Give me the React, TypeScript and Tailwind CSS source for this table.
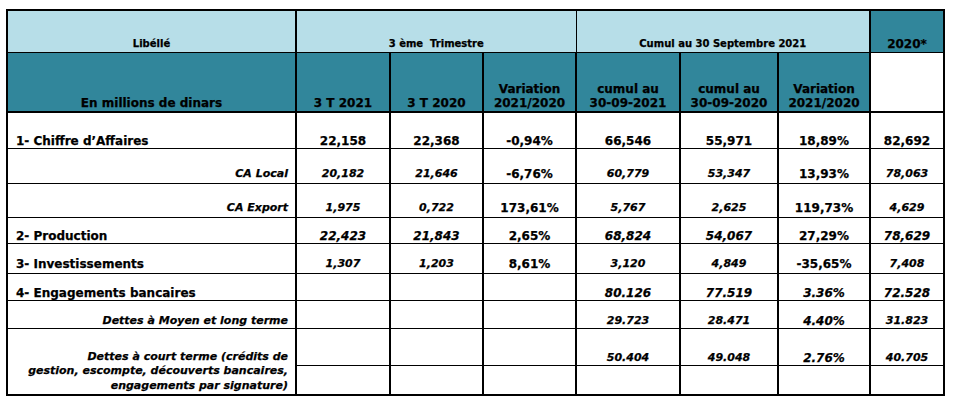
import React from 'react';

type Cell = { v: string; i?: boolean; s?: boolean };

type Row = {
  label: string;
  sub?: boolean;
  h: string;
  pb: string;
  cells: Cell[];
};

const rows: Row[] = [
  {
    label: '1- Chiffre d\u2019Affaires',
    h: 'h-[36px]',
    pb: 'pb-0',
    cells: [
      { v: '22,158' }, { v: '22,368' }, { v: '-0,94%' },
      { v: '66,546' }, { v: '55,971' }, { v: '18,89%' }, { v: '82,692' },
    ],
  },
  {
    label: 'CA Local',
    sub: true,
    h: 'h-[35px]',
    pb: 'pb-[2px]',
    cells: [
      { v: '20,182', i: true, s: true }, { v: '21,646', i: true, s: true }, { v: '-6,76%' },
      { v: '60,779', i: true, s: true }, { v: '53,347', i: true, s: true }, { v: '13,93%' }, { v: '78,063', i: true, s: true },
    ],
  },
  {
    label: 'CA Export',
    sub: true,
    h: 'h-[34px]',
    pb: 'pb-[2px]',
    cells: [
      { v: '1,975', i: true, s: true }, { v: '0,722', i: true, s: true }, { v: '173,61%' },
      { v: '5,767', i: true, s: true }, { v: '2,625', i: true, s: true }, { v: '119,73%' }, { v: '4,629', i: true, s: true },
    ],
  },
  {
    label: '2- Production',
    h: 'h-[26px]',
    pb: 'pb-0',
    cells: [
      { v: '22,423', i: true }, { v: '21,843', i: true }, { v: '2,65%' },
      { v: '68,824', i: true }, { v: '54,067', i: true }, { v: '27,29%' }, { v: '78,629', i: true },
    ],
  },
  {
    label: '3- Investissements',
    h: 'h-[30px]',
    pb: 'pb-[2px]',
    cells: [
      { v: '1,307', i: true, s: true }, { v: '1,203', i: true, s: true }, { v: '8,61%' },
      { v: '3,120', i: true, s: true }, { v: '4,849', i: true, s: true }, { v: '-35,65%' }, { v: '7,408', i: true, s: true },
    ],
  },
  {
    label: '4- Engagements bancaires',
    h: 'h-[27px]',
    pb: 'pb-0',
    cells: [
      { v: '' }, { v: '' }, { v: '' },
      { v: '80.126', i: true }, { v: '77.519', i: true }, { v: '3.36%', i: true }, { v: '72.528', i: true },
    ],
  },
  {
    label: 'Dettes \u00e0 Moyen et long terme',
    sub: true,
    h: 'h-[28px]',
    pb: 'pb-0',
    cells: [
      { v: '' }, { v: '' }, { v: '' },
      { v: '29.723', i: true, s: true }, { v: '28.471', i: true, s: true }, { v: '4.40%', i: true }, { v: '31.823', i: true, s: true },
    ],
  },
];

const colWidths = ['w-[289px]', 'w-[94px]', 'w-[93px]', 'w-[93px]', 'w-[104px]', 'w-[98px]', 'w-[92px]', 'w-[74px]'];

function NumCell({ c, pb }: { c: Cell; pb: string }) {
  return (
    <td
      className={`border-x-2 border-y border-black text-center align-bottom leading-[14px] font-bold ${pb} ${
        c.s ? 'text-[11px]' : 'text-[12px]'
      } ${c.i ? 'italic' : ''}`}
    >
      {c.v}
    </td>
  );
}

export default function App() {
  return (
    <div className="w-[957px] h-[402px] bg-white pt-[9px] pl-[6px] font-['DejaVu_Sans',sans-serif] text-black [-webkit-text-stroke:0.25px_black]">
      <table className="table-fixed border-collapse border-2 border-black">
        <colgroup>
          {colWidths.map((w, k) => (
            <col key={k} className={w} />
          ))}
        </colgroup>
        <tbody>
          <tr className="h-[42px]">
            <td className="bg-[#B7DEE8] border-t border-r-2 border-b border-black text-center align-bottom text-[10px] leading-[12px] font-bold pb-[2px]">
              Libéllé
            </td>
            <td colSpan={3} className="bg-[#B7DEE8] border-t border-x border-b border-black text-center align-bottom text-[10px] leading-[12px] font-bold pb-[2px]">
              3 ème&nbsp; Trimestre
            </td>
            <td colSpan={3} className="bg-[#B7DEE8] border-t border-x border-b border-black text-center align-bottom text-[10px] leading-[12px] font-bold pb-[2px]">
              Cumul au 30 Septembre 2021
            </td>
            <td className="bg-[#31869B] border-t border-l-2 border-b border-black text-center align-bottom text-[12px] leading-[14px] font-bold pb-[1px]">
              2020*
            </td>
          </tr>
          <tr className="h-[60px]">
            <td className="bg-[#31869B] border-r-2 border-b-2 border-black text-center align-bottom text-[12px] leading-[14px] font-bold pb-[1px]">
              En millions de dinars
            </td>
            {['3 T 2021', '3 T 2020', 'Variation\n2021/2020', 'cumul au\n30-09-2021', 'cumul au\n30-09-2020', 'Variation\n2021/2020'].map((t, k) => (
              <td
                key={k}
                className="bg-[#31869B] border-x-2 border-b-2 border-black text-center align-bottom text-[12px] leading-[14px] font-bold pb-[1px] whitespace-pre-line"
              >
                {t}
              </td>
            ))}
            <td className="bg-white border-l-2 border-b-2 border-black" />
          </tr>
          {rows.map((r, k) => (
            <tr key={k} className={r.h}>
              <td
                className={`border-r-2 border-y border-black align-bottom leading-[14px] font-bold ${r.pb} ${
                  r.sub ? 'text-right pr-[7px] text-[11px] italic' : 'text-left pl-[8px] text-[12px]'
                }`}
              >
                {r.label}
              </td>
              {r.cells.map((c, j) => (
                <NumCell key={j} c={c} pb={r.pb} />
              ))}
            </tr>
          ))}
          <tr className="h-[37px]">
            <td
              rowSpan={2}
              className="border-r-2 border-y border-black align-bottom text-right pr-[7px] text-[11px] italic leading-[14.5px] font-bold pb-[1px]"
            >
              Dettes à court terme (crédits de
              <br />
              gestion, escompte, découverts bancaires,
              <br />
              engagements par signature)
            </td>
            <NumCell c={{ v: '' }} pb="pb-0" />
            <NumCell c={{ v: '' }} pb="pb-0" />
            <NumCell c={{ v: '' }} pb="pb-0" />
            <NumCell c={{ v: '50.404', i: true, s: true }} pb="pb-0" />
            <NumCell c={{ v: '49.048', i: true, s: true }} pb="pb-0" />
            <NumCell c={{ v: '2.76%', i: true }} pb="pb-0" />
            <NumCell c={{ v: '40.705', i: true, s: true }} pb="pb-0" />
          </tr>
          <tr className="h-[30px]">
            {Array.from({ length: 7 }).map((_, k) => (
              <NumCell key={k} c={{ v: '' }} pb="pb-0" />
            ))}
          </tr>
        </tbody>
      </table>
    </div>
  );
}
